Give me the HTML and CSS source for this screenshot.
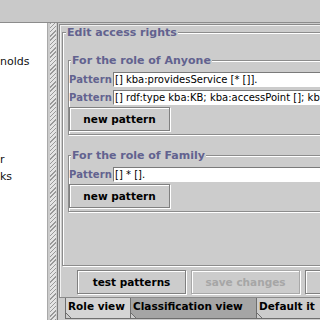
FILE: index.html
```html
<!DOCTYPE html>
<html>
<head>
<meta charset="utf-8">
<link rel="stylesheet" href="styles.css">
</head>
<body>
<div class="top"></div>
<div class="main">
  <div class="left">
    <div class="item i1">nolds</div>
    <div class="item i2">r</div>
    <div class="item i3">ks</div>
  </div>
  <div class="split"><div class="bumps"></div></div>
  <div class="right">
    <div class="tabcontent">
      <fieldset class="outer">
        <legend class="otitle">Edit access rights</legend>
        <fieldset class="group">
          <legend class="gtitle">For the role of Anyone</legend>
          <div class="row"><span class="lbl">Pattern</span><div class="field">[] kba:providesService [* []].</div></div>
          <div class="row"><span class="lbl">Pattern</span><div class="field">[] rdf:type kba:KB; kba:accessPoint []; kba:name [].</div></div>
          <button class="btn np">new pattern</button>
        </fieldset>
        <fieldset class="group g2">
          <legend class="gtitle">For the role of Family</legend>
          <div class="row"><span class="lbl">Pattern</span><div class="field">[] * [].</div></div>
          <button class="btn np">new pattern</button>
        </fieldset>
      </fieldset>
      <div class="buttons">
        <button class="btn wide">test patterns</button>
        <button class="btn wide dis">save changes</button>
        <button class="btn wide"></button>
      </div>
    </div>
    <div class="tabs">
      <div class="tab sel">Role view</div>
      <div class="tab dark">Classification view</div>
      <div class="tab last">Default it</div>
    </div>
  </div>
</div>
</body>
</html>
```
FILE: styles.css
```css
* { box-sizing: border-box; }
html, body { margin: 0; padding: 0; }
body {
  width: 320px;
  height: 320px;
  overflow: hidden;
  background: #cccccc;
  font-family: "DejaVu Sans", sans-serif;
  display: flex;
  flex-direction: column;
}
.top {
  height: 23px;
  flex: none;
  background: #c9c9c9;
  border-bottom: 1px solid #8c8c8c;
}
.main {
  flex: 1;
  display: flex;
  min-height: 0;
}
.left {
  width: 48px;
  flex: none;
  background: #ffffff;
  border-right: 1px solid #a8a8a8;
  display: flex;
  flex-direction: column;
  font-size: 11px;
  line-height: 16px;
  color: #111111;
  overflow: hidden;
  white-space: nowrap;
}
.i1 { margin-top: 31px; }
.i2 { margin-top: 82px; }
.i3 { margin-top: 1px; }
.split {
  width: 9px;
  flex: none;
  padding: 0 1px 0 2px;
}
.bumps {
  height: 100%;
  background: repeating-linear-gradient(135deg, #999999 0 1px, #e4e4e4 1px 3px);
}
.right {
  flex: 1;
  min-width: 0;
  overflow: hidden;
  border-left: 1px solid #7e7e7e;
  padding-top: 1px;
  display: flex;
  flex-direction: column;
}
.tabcontent {
  width: 420px;
  height: 274px;
  flex: none;
  margin-left: 1px;
  border: 1px solid #8a8a8a;
  box-shadow: inset 1px 1px 0 #f2f2f2;
  display: flex;
  flex-direction: column;
  padding: 1px 0 0 2px;
}
fieldset {
  margin: 0;
  min-width: 0;
  border: 1px solid #8c8c8c;
  box-shadow: inset 1px 1px 0 #ffffff, 1px 1px 0 #ffffff;
}
legend {
  background: #cccccc;
  color: #62628f;
  font-weight: bold;
  font-size: 11px;
  line-height: 13px;
  padding: 0 1px;
}
.outer {
  flex: 1;
  margin-bottom: 1px;
  padding: 15px 0 0 5px;
}
.otitle { margin-left: -2px; }
.group {
  padding: 5px 0 3px 0;
}
.g2 { margin-top: 14px; }
.gtitle { margin-left: 2px; }
.row {
  display: flex;
  align-items: center;
  height: 15px;
  margin-bottom: 3px;
}
.row + .row { margin-bottom: 2px; }
.g2 .row { margin-bottom: 2px; }
.lbl {
  width: 44px;
  flex: none;
  font-weight: bold;
  font-size: 10px;
  color: #62628f;
  letter-spacing: 0.1px;
}
.field {
  flex: 1;
  height: 15px;
  background: #ffffff;
  border: 1px solid;
  border-color: #7a7a7a #ffffff #ffffff #7a7a7a;
  font-size: 10px;
  line-height: 13px;
  padding-left: 1px;
  white-space: nowrap;
  overflow: hidden;
  color: #000000;
}
.btn {
  display: block;
  width: 101px;
  height: 24px;
  padding: 0;
  margin: 0;
  font-family: "DejaVu Sans", sans-serif;
  font-weight: bold;
  font-size: 10.5px;
  color: #000000;
  background: #cccccc;
  border: 1px solid #808080;
  box-shadow: inset 1px 1px 0 #ffffff, 1px 1px 0 #ffffff;
  white-space: nowrap;
}
.buttons {
  height: 30px;
  flex: none;
  display: flex;
  gap: 5px;
  padding: 3px 0 0 15px;
}
.wide { width: 109px; flex: none; }
.dis { color: #a6a6a6; border-color: #a8a8a8; }
.tabs {
  height: 22px;
  flex: none;
  display: flex;
  margin-left: 1px;
  padding-left: 6px;
}
.tab {
  position: relative;
  flex: none;
  height: 21px;
  font-weight: bold;
  font-size: 10.5px;
  line-height: 14px;
  padding: 1px 0 0 2px;
  color: #000000;
  white-space: nowrap;
  overflow: hidden;
  border: 1px solid #6e6e6e;
  border-top: none;
  background: #d4d4d4;
}
.tab::after {
  content: "";
  position: absolute;
  left: -1px;
  bottom: -1px;
  width: 7px;
  height: 7px;
  background: linear-gradient(to bottom left, transparent 0 calc(50% - 0.7px), #6e6e6e calc(50% - 0.7px) calc(50% + 0.7px), #cccccc calc(50% + 0.7px));
}
.sel { width: 66px; }
.dark { width: 127px; background: #a5a5a5; margin-left: -1px; }
.last { width: 80px; background: #cccccc; margin-left: -1px; }
```
